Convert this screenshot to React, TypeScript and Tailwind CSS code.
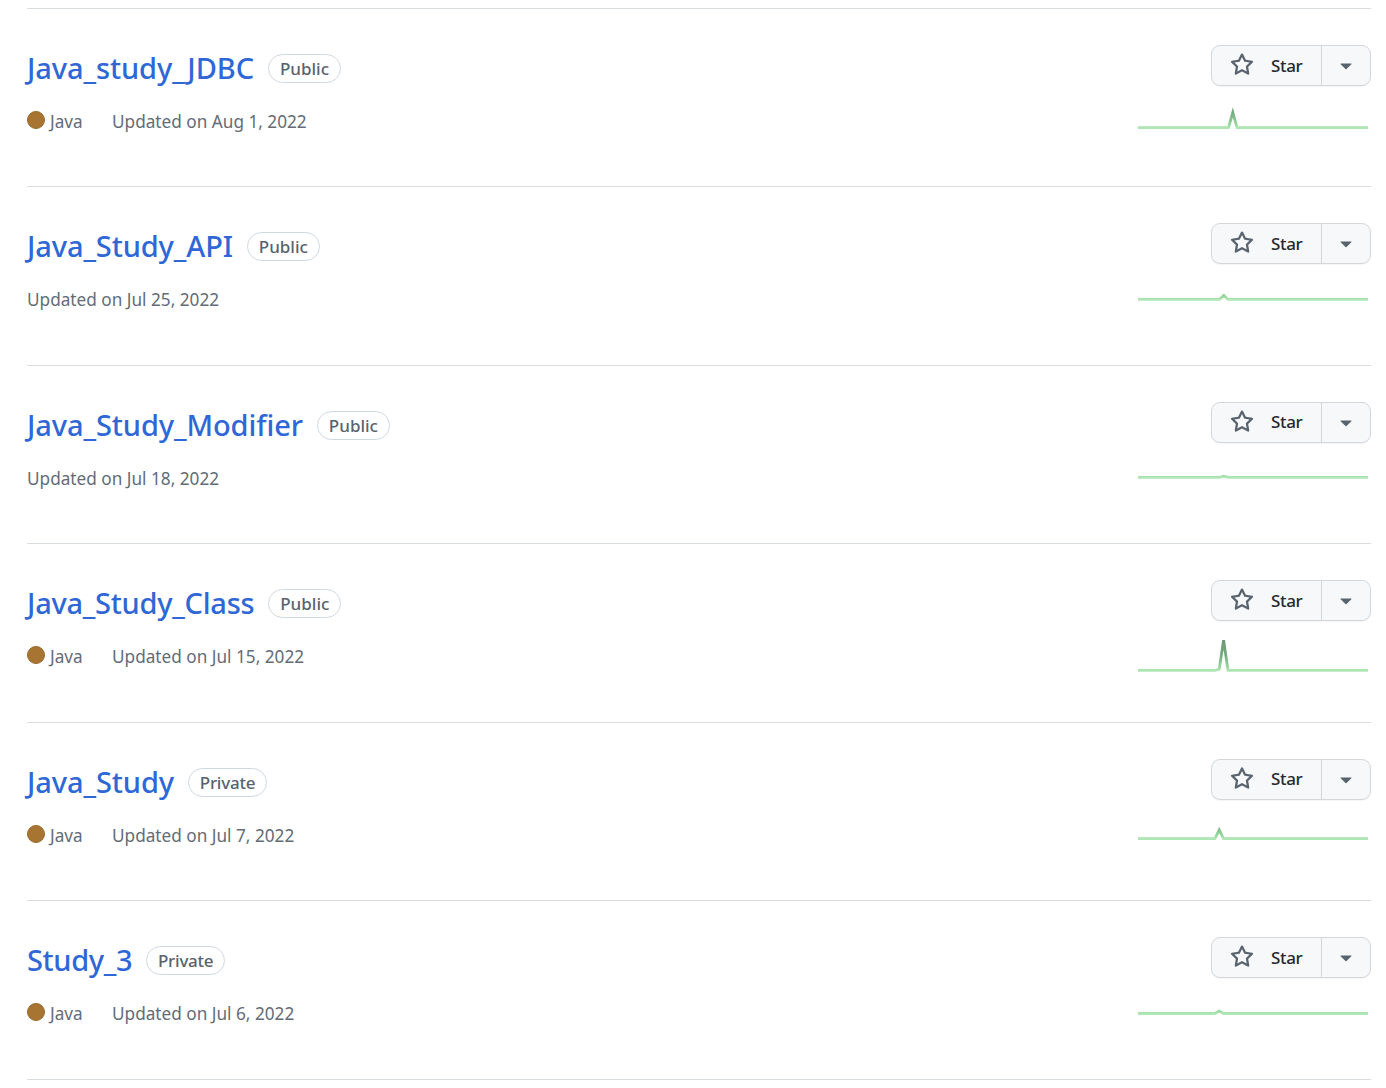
interface Repo {
  name: string
  tracking: string
  visibility: 'Public' | 'Private'
  language?: string
  updated: string
  line: string
  base: number
}

// line / base are in the 230x44 sparkline box
const repos: Repo[] = [
  {
    name: 'Java_study_JDBC',
    tracking: 'tracking-[-0.1px]',
    visibility: 'Public',
    language: 'Java',
    updated: 'Aug 1, 2022',
    line: '0,33.7 90.5,33.7 94.8,18.5 99,33.7 230,33.7',
    base: 33.7,
  },
  {
    name: 'Java_Study_API',
    tracking: 'tracking-[-0.12px]',
    visibility: 'Public',
    updated: 'Jul 25, 2022',
    line: '0,27.4 81.5,27.4 85.8,23.4 90,27.4 230,27.4',
    base: 27.4,
  },
  {
    name: 'Java_Study_Modifier',
    tracking: 'tracking-[-0.1px]',
    visibility: 'Public',
    updated: 'Jul 18, 2022',
    line: '0,26.4 81.5,26.4 85.8,25.1 90,26.4 230,26.4',
    base: 26.4,
  },
  {
    name: 'Java_Study_Class',
    tracking: 'tracking-[-0.27px]',
    visibility: 'Public',
    language: 'Java',
    updated: 'Jul 15, 2022',
    line: '0,41.3 77,41.3 81.2,40.3 85.6,11.3 90,41.3 230,41.3',
    base: 41.3,
  },
  {
    name: 'Java_Study',
    tracking: 'tracking-[-0.1px]',
    visibility: 'Private',
    language: 'Java',
    updated: 'Jul 7, 2022',
    line: '0,30.6 77,30.6 81.2,22 85.5,30.6 230,30.6',
    base: 30.6,
  },
  {
    name: 'Study_3',
    tracking: 'tracking-[-0.36px]',
    visibility: 'Private',
    language: 'Java',
    updated: 'Jul 6, 2022',
    line: '0,27.5 77,27.5 81.2,25 85.5,27.5 230,27.5',
    base: 27.5,
  },
]

function StarButton() {
  return (
    <div className="flex h-[41px] w-[160px] rounded-[9px] border border-[#d4d7da] bg-[#f6f8fa] shadow-[0_1px_0_rgba(31,35,40,0.04)]">
      <button className="flex w-[110px] items-center border-r border-[#d4d7da] pl-[18px]">
        <svg viewBox="0 0 16 16" className="-mt-px size-6 shrink-0 fill-[#59636e]">
          <path d="M8 .25a.75.75 0 0 1 .673.418l1.882 3.815 4.21.612a.75.75 0 0 1 .416 1.279l-3.046 2.97.719 4.192a.751.751 0 0 1-1.088.791L8 12.347l-3.766 1.98a.75.75 0 0 1-1.088-.79l.72-4.194L.818 6.374a.75.75 0 0 1 .416-1.28l4.21-.611L7.327.668A.75.75 0 0 1 8 .25Zm0 2.445L6.615 5.5a.75.75 0 0 1-.564.41l-3.097.45 2.24 2.184a.75.75 0 0 1 .216.664l-.528 3.084 2.769-1.456a.75.75 0 0 1 .698 0l2.77 1.456-.53-3.084a.75.75 0 0 1 .216-.664l2.24-2.183-3.096-.45a.75.75 0 0 1-.564-.41L8 2.694Z" />
        </svg>
        <span className="ml-[17px] text-[17px] leading-6 font-medium tracking-[-0.35px] text-[#25292e]">Star</span>
      </button>
      <button className="flex flex-1 items-center justify-center">
        <svg viewBox="0 0 16 16" className="-mt-px size-6 fill-[#59636e]">
          <path d="m4.427 7.427 3.396 3.396a.25.25 0 0 0 .354 0l3.396-3.396A.25.25 0 0 0 11.396 7H4.604a.25.25 0 0 0-.177.427Z" />
        </svg>
      </button>
    </div>
  )
}

function Sparkline({ id, line, base }: { id: string; line: string; base: number }) {
  return (
    <svg width="230" height="44" viewBox="0 0 230 44">
      <defs>
        <linearGradient id={id} gradientUnits="userSpaceOnUse" x1="0" x2="0" y1={base} y2={base - 30}>
          <stop offset="0" stopColor="#aee6b4" />
          <stop offset="0.15" stopColor="#8fd298" />
          <stop offset="0.5" stopColor="#78ab80" />
          <stop offset="1" stopColor="#6c9672" />
        </linearGradient>
      </defs>
      <polyline points={line} fill="none" stroke={`url(#${id})`} strokeWidth="2.8" />
    </svg>
  )
}

function RepoRow({ repo }: { repo: Repo }) {
  return (
    <li className="flex h-[178.45px] justify-between border-t border-[#d8dde2]">
      <div className="pt-[45px]">
        <div className="flex h-[29px] items-center gap-[14px]">
          <h3 className={`-mt-0.5 text-[29px] leading-[29px] font-medium whitespace-nowrap text-[#2f68d6] ${repo.tracking}`}>
            {repo.name}
          </h3>
          {repo.visibility === 'Public' ? (
            <span className="flex h-[29px] w-[73px] items-center justify-center rounded-full border border-[#d1d9e0] text-[17px] font-medium text-[#59636e]">
              Public
            </span>
          ) : (
            <span className="flex h-[29px] w-[79px] items-center justify-center rounded-full border border-[#d1d9e0] text-[17px] font-medium tracking-[-0.25px] text-[#59636e]">
              Private
            </span>
          )}
        </div>

        <div className="mt-[27px] flex h-6 items-center text-[17.2px] leading-6 text-[#636c76]">
          {repo.language && (
            <span className="mr-[29px] flex w-[56px] items-center">
              <span className="-mt-[4px] mr-[5px] size-[18px] shrink-0 rounded-full border border-[#976a2b] bg-[#a87432]" />
              {repo.language}
            </span>
          )}
          <span>Updated on {repo.updated}</span>
        </div>
      </div>

      <div className="flex flex-col items-end pt-[36px]">
        <StarButton />
        <div className="mt-[8px] mr-[3px]">
          <Sparkline id={`spark-${repo.name}`} line={repo.line} base={repo.base} />
        </div>
      </div>
    </li>
  )
}

export default function App() {
  return (
    <div className="h-[1088px] overflow-hidden bg-white pt-2 pr-[15px] pl-[27px] font-['Noto_Sans',sans-serif]">
      <ul className="border-b border-[#d8dde2]">
        {repos.map((repo) => (
          <RepoRow key={repo.name} repo={repo} />
        ))}
      </ul>
    </div>
  )
}
